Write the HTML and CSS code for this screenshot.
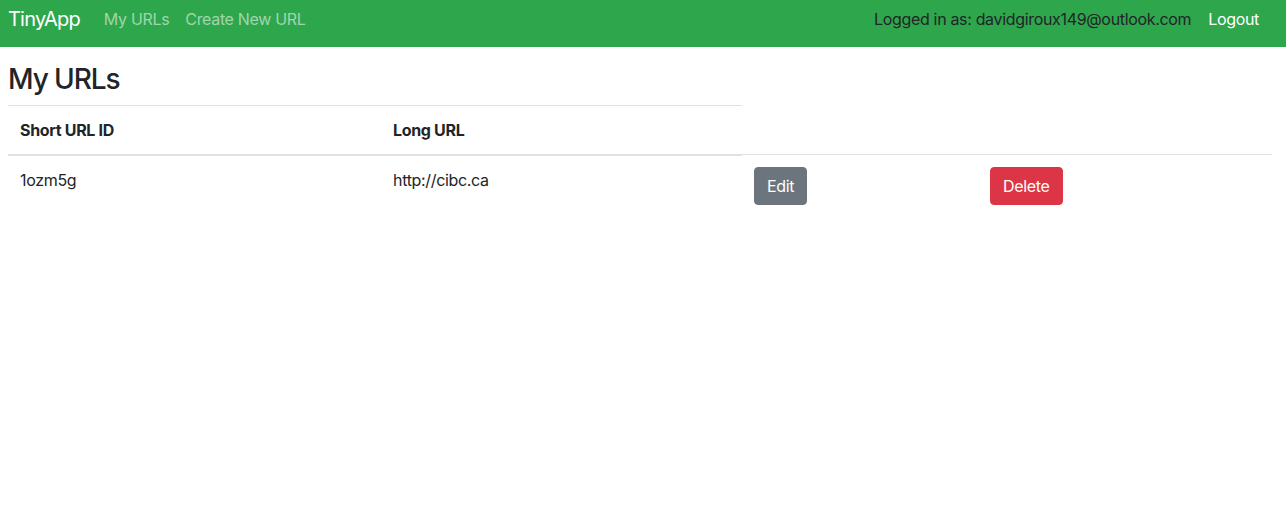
FILE: index.html
```html
<!DOCTYPE html>
<html lang="en">
<head>
<meta charset="utf-8">
<title>TinyApp</title>
<link rel="stylesheet" href="styles.css">
</head>
<body>
<nav class="navbar">
  <a class="brand" href="#">TinyApp</a>
  <div class="nav-links">
    <a class="nav-link" href="#">My URLs</a>
    <a class="nav-link" href="#">Create New URL</a>
  </div>
  <div class="nav-right">
    <span class="nav-text">Logged in as: davidgiroux149@outlook.com</span>
    <a class="nav-link logout" href="#">Logout</a>
  </div>
</nav>
<main class="content">
  <h3 class="title">My URLs</h3>
  <table class="table">
    <colgroup>
      <col class="c1"><col class="c2"><col class="c3"><col class="c4">
    </colgroup>
    <thead>
      <tr>
        <th>Short URL ID</th>
        <th>Long URL</th>
      </tr>
    </thead>
    <tbody>
      <tr>
        <td>1ozm5g</td>
        <td>http://cibc.ca</td>
        <td><a class="btn btn-secondary" href="#">Edit</a></td>
        <td><button class="btn btn-danger">Delete</button></td>
      </tr>
    </tbody>
  </table>
</main>
</body>
</html>
```

FILE: styles.css
```css
* { box-sizing: border-box; }
body {
  margin: 0;
  font-family: Inter, "Noto Sans", "Liberation Sans", sans-serif;
  font-size: 16px;
  line-height: 1.5;
  letter-spacing: -0.33px;
  color: #212529;
  background: #fff;
}
a { text-decoration: none; }
.navbar {
  display: flex;
  align-items: center;
  height: 47px;
  background: #2ea64c;
  padding: 0 19px 0 8px;
}
.brand {
  font-size: 20px;
  line-height: 30px;
  letter-spacing: -0.8px;
  color: #fff;
  margin-right: 16px;
  padding-bottom: 9px;
}
.nav-links { display: flex; padding-bottom: 9px; }
.nav-link {
  color: rgba(255,255,255,.55);
  padding: 0 8px;
}
.nav-right {
  margin-left: auto;
  display: flex;
  align-items: center;
  padding-bottom: 9px;
}
.nav-text { color: #212529; margin-right: 9px; }
.logout { color: #fff; }
.content { padding: 16px 14px 0 8px; }
.title {
  margin: 0 0 8px;
  font-size: 28px;
  font-weight: 500;
  line-height: 1.2;
  letter-spacing: -1.1px;
}
.table {
  width: 1264px;
  border-collapse: collapse;
  table-layout: fixed;
}
.c1 { width: 373px; }
.c2 { width: 361px; }
.c3 { width: 236px; }
.c4 { width: 294px; }
.table th, .table td {
  padding: 12px;
  text-align: left;
  vertical-align: top;
}
.table th {
  font-weight: 700;
  border-top: 1px solid #dee2e6;
  border-bottom: 2px solid #dee2e6;
}
.table td { border-top: 1px solid #dee2e6; }
.btn {
  display: inline-block;
  font: inherit;
  letter-spacing: inherit;
  line-height: 24px;
  padding: 6px 12px;
  border: 1px solid transparent;
  border-radius: 4px;
  color: #fff;
  cursor: pointer;
}
.btn-secondary { background: #6c757d; border-color: #6c757d; }
.btn-danger { background: #dc3545; border-color: #dc3545; }
```
